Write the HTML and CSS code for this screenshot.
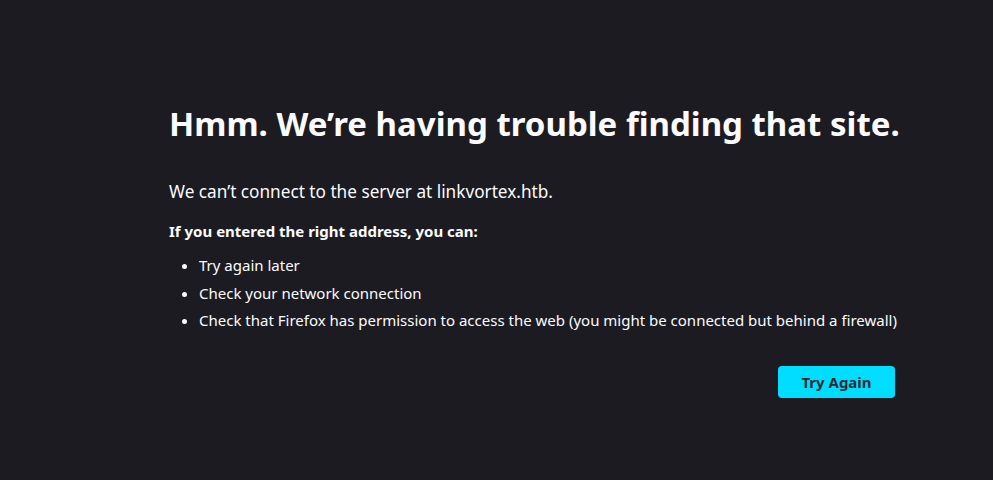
FILE: index.html
```html
<!DOCTYPE html>
<html lang="en">
<head>
<meta charset="utf-8">
<title>Server Not Found</title>
<link rel="stylesheet" href="styles.css">
</head>
<body>
<main class="container">
  <h1 class="title">Hmm. We’re having trouble finding that site.</h1>
  <p class="intro">We can’t connect to the server at linkvortex.htb.</p>
  <p class="lead">If you entered the right address, you can:</p>
  <ul class="tips">
    <li>Try again later</li>
    <li>Check your network connection</li>
    <li>Check that Firefox has permission to access the web (you might be connected but behind a firewall)</li>
  </ul>
  <div class="actions">
    <button class="try-again">Try Again</button>
  </div>
</main>
</body>
</html>
```

FILE: styles.css
```css
html, body {
  margin: 0;
  padding: 0;
  background: #1c1b22;
  color: #fbfbfe;
  font-family: "Noto Sans", "Open Sans", sans-serif;
  height: 100%;
}
.container {
  width: 726px;
  padding: 100px 0 0 169px;
}
.title {
  margin: 0;
  font-size: 33px;
  font-weight: 700;
  line-height: 48px;
  white-space: nowrap;
}
.intro {
  margin: 32px 0 0;
  font-size: 17.2px;
  line-height: 24px;
}
.lead {
  margin: 17px 0 0;
  font-size: 15px;
  font-weight: 700;
  line-height: 20px;
}
.tips {
  margin: 14px 0 0;
  padding-left: 30px;
  font-size: 15px;
  line-height: 20px;
  white-space: nowrap;
}
.tips li {
  margin-bottom: 7.5px;
}
.actions {
  display: flex;
  justify-content: flex-end;
  margin-top: 36px;
}
.try-again {
  width: 117px;
  height: 32px;
  border: none;
  border-radius: 4px;
  background: #00ddff;
  color: #2b2a33;
  font-family: inherit;
  font-size: 15px;
  font-weight: 700;
  padding: 0;
}
```
